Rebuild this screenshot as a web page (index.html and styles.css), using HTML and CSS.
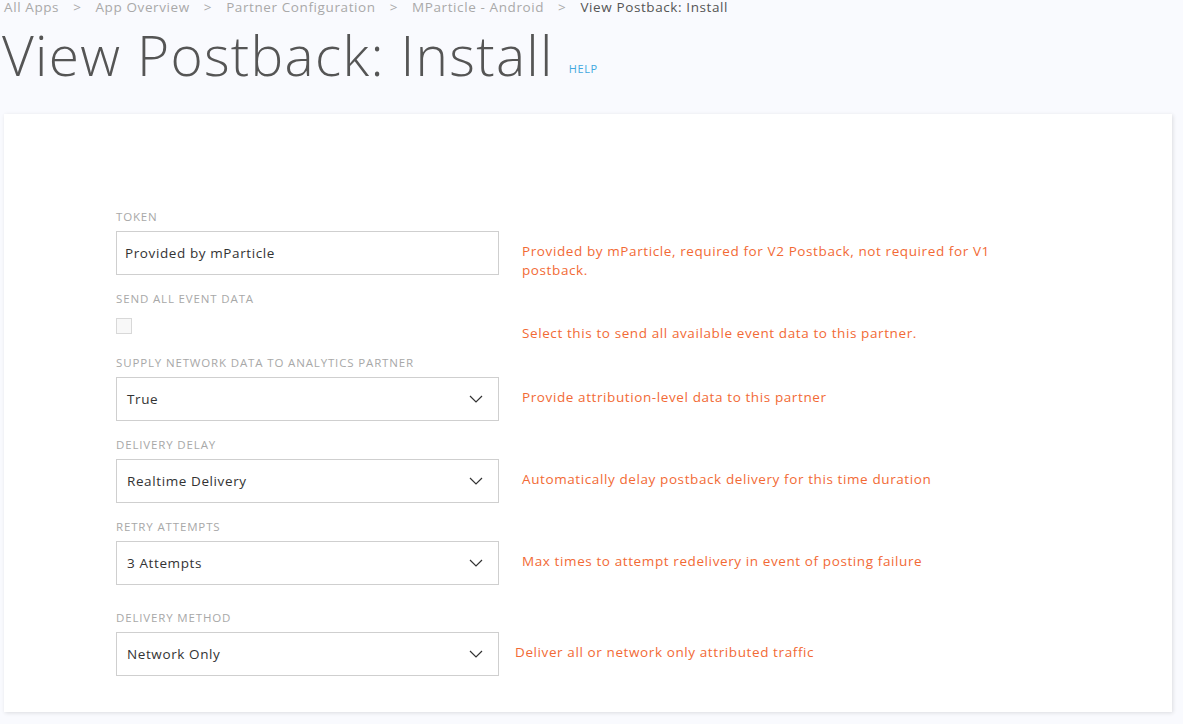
FILE: index.html
```html
<!DOCTYPE html>
<html>
<head>
<meta charset="utf-8">
<link rel="stylesheet" href="styles.css">
</head>
<body>
<nav class="crumbs">
  <span class="crumb">All Apps</span><span class="sep">&gt;</span>
  <span class="crumb">App Overview</span><span class="sep">&gt;</span>
  <span class="crumb">Partner Configuration</span><span class="sep">&gt;</span>
  <span class="crumb">MParticle - Android</span><span class="sep">&gt;</span>
  <span class="crumb current">View Postback: Install</span>
</nav>
<header class="title-row">
  <h1 class="title">View Postback: Install</h1>
  <a class="help-link">HELP</a>
</header>
<main class="card">
  <div class="row">
    <div class="field">
      <div class="label">TOKEN</div>
      <div class="control input">Provided by mParticle</div>
    </div>
    <div class="hint">Provided by mParticle, required for V2 Postback, not required for V1 postback.</div>
  </div>
  <div class="row row-check">
    <div class="field">
      <div class="label">SEND ALL EVENT DATA</div>
      <div class="checkbox"></div>
    </div>
    <div class="hint">Select this to send all available event data to this partner.</div>
  </div>
  <div class="row">
    <div class="field">
      <div class="label">SUPPLY NETWORK DATA TO ANALYTICS PARTNER</div>
      <div class="control select"><span>True</span><svg class="chev" viewBox="0 0 14 8"><path d="M1 1 L7 7 L13 1" /></svg></div>
    </div>
    <div class="hint">Provide attribution-level data to this partner</div>
  </div>
  <div class="row">
    <div class="field">
      <div class="label">DELIVERY DELAY</div>
      <div class="control select"><span>Realtime Delivery</span><svg class="chev" viewBox="0 0 14 8"><path d="M1 1 L7 7 L13 1" /></svg></div>
    </div>
    <div class="hint">Automatically delay postback delivery for this time duration</div>
  </div>
  <div class="row">
    <div class="field">
      <div class="label">RETRY ATTEMPTS</div>
      <div class="control select"><span>3 Attempts</span><svg class="chev" viewBox="0 0 14 8"><path d="M1 1 L7 7 L13 1" /></svg></div>
    </div>
    <div class="hint">Max times to attempt redelivery in event of posting failure</div>
  </div>
  <div class="row row-last">
    <div class="field">
      <div class="label">DELIVERY METHOD</div>
      <div class="control select"><span>Network Only</span><svg class="chev" viewBox="0 0 14 8"><path d="M1 1 L7 7 L13 1" /></svg></div>
    </div>
    <div class="hint hint-shift">Deliver all or network only attributed traffic</div>
  </div>
</main>
</body>
</html>
```
FILE: styles.css
```css
* { box-sizing: border-box; }
html, body { margin: 0; padding: 0; }
body {
  background: #f9fafe;
  font-family: "Open Sans", "Lato", sans-serif;
  color: #333;
  width: 1183px;
  height: 724px;
  overflow: hidden;
}
.crumbs {
  display: flex;
  align-items: center;
  padding-left: 4px;
  height: 14px;
  font-size: 13.5px;
  line-height: 14px;
  color: #a9a9a9;
  letter-spacing: 0.6px;
}
.sep { margin: 0 14px 0 14px; }
.crumb.current { color: #555; }
.title-row {
  display: flex;
  align-items: flex-end;
  padding-left: 2px;
  margin-top: 11px;
  height: 60px;
}
.title {
  margin: 0;
  font-size: 55px;
  line-height: 60px;
  font-weight: 300;
  color: #555;
  letter-spacing: 1.3px;
}
.help-link {
  font-size: 11px;
  color: #42a8df;
  margin-left: 15px;
  margin-bottom: 9px;
  letter-spacing: 0.6px;
}
.card {
  margin: 29px 0 0 4px;
  width: 1168px;
  height: 598px;
  background: #fff;
  box-shadow: 1px 1px 4px rgba(0,0,0,0.12);
  padding: 96px 0 0 112px;
}
.row {
  display: flex;
  align-items: flex-start;
  margin-bottom: 17px;
}
.field { width: 383px; flex: none; }
.label {
  font-size: 11.5px;
  line-height: 14px;
  color: #a8a8a8;
  margin-bottom: 7px;
  letter-spacing: 0.85px;
}
.control {
  height: 44px;
  border: 1px solid #cfcfcf;
  background: #fff;
  font-size: 13.5px;
  letter-spacing: 0.6px;
  color: #333;
  display: flex;
  align-items: center;
}
.input { padding-left: 8px; }
.select { padding: 0 15px 0 10px; justify-content: space-between; }
.chev { width: 14px; height: 8px; fill: none; stroke: #333; stroke-width: 1.2; }
.checkbox {
  width: 16px;
  height: 16px;
  border: 1px solid #d8d8d8;
  background: #f8f8f8;
  margin-top: 12px;
}
.row-check { margin-bottom: 22px; }
.hint {
  margin-left: 23px;
  margin-bottom: -20px;
  width: 480px;
  padding-top: 32px;
  font-size: 13.5px;
  line-height: 19px;
  letter-spacing: 0.6px;
  color: #f26a35;
}
.row-last { margin-top: 26px; }
.hint-shift { margin-left: 16px; }
```
